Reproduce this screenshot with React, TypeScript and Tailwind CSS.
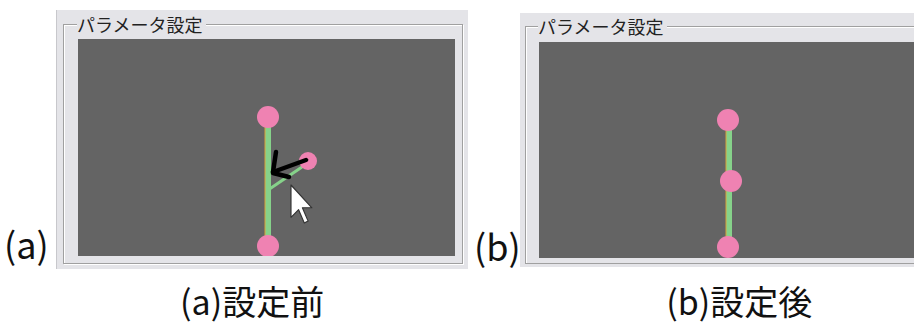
import React from 'react';

const jp = { fontFamily: '"Noto Sans CJK JP", "Noto Sans", sans-serif' };

function Node({ x, y, r = 10 }: { x: number; y: number; r?: number }) {
  return <circle cx={x} cy={y} r={r} fill="#ef82b2" />;
}

function Stem({ x, y1, y2 }: { x: number; y1: number; y2: number }) {
  return (
    <g>
      <line x1={x} y1={y1} x2={x} y2={y2} stroke="#86d28a" strokeWidth={6} />
      <line x1={x - 3} y1={y1} x2={x - 3} y2={y2} stroke="#d9a23a" strokeWidth={1} />
    </g>
  );
}

function BeforeDrawing() {
  return (
    <svg width="377" height="217" viewBox="0 0 377 217">
      <Stem x={190} y1={78} y2={207} />
      {/* branch to the moved node */}
      <line x1={190} y1={151} x2={224} y2={128} stroke="#86d28a" strokeWidth={3} />
      <Node x={190} y={78} r={11} />
      <Node x={190} y={207} r={11} />
      <Node x={230} y={122} r={9} />
      {/* drag arrow */}
      <g stroke="#000" strokeWidth={4.5} strokeLinecap="round" fill="none">
        <line x1={228} y1={121} x2={195} y2={133} />
        <line x1={198} y1={113} x2={195} y2={133} />
        <line x1={195} y1={134} x2={211} y2={138} />
      </g>
      {/* mouse cursor */}
      <g transform="translate(213,146) scale(1.9)">
        <path
          d="M0 0 L0 17 L4 13 L7 20 L9 19 L6 12 L11 12 Z"
          fill="#fff"
          stroke="#333"
          strokeWidth={0.6}
          strokeLinejoin="round"
        />
      </g>
    </svg>
  );
}

function AfterDrawing() {
  return (
    <svg width="375" height="216" viewBox="0 0 375 216">
      <Stem x={190} y1={78} y2={205} />
      <Node x={189} y={78} r={11} />
      <Node x={192} y={139} r={11} />
      <Node x={189} y={205} r={11} />
    </svg>
  );
}

function Panel({ wide, children }: { wide?: boolean; children: React.ReactNode }) {
  return (
    <div
      className={
        wide
          ? 'mt-[13px] h-[254px] w-[394px] shrink-0 bg-[#e4e4e8] pl-[5px] pt-[3px]'
          : 'mt-[10px] h-[259px] w-[412px] shrink-0 bg-[#e4e4e8] pl-[7px] pt-[4px] pr-[5px] shadow-[inset_1px_0_0_#c8c8cc]'
      }
    >
      <fieldset
        className={
          wide
            ? 'h-[248px] border border-r-0 border-[#a0a0a0] pl-[13px] shadow-[inset_1px_1px_0_#fff]'
            : 'h-[250px] border border-[#a0a0a0] pl-[14px] pr-[7px] shadow-[inset_1px_1px_0_#fff,1px_1px_0_#fff]'
        }
      >
        <legend
          className="-ml-[1px] bg-[#e4e4e8] pr-[4px] text-[18px] leading-[21px] text-[#222]"
          style={jp}
        >
          パラメータ設定
        </legend>
        <div className={wide ? 'mt-[5px] h-[216px] bg-[#646464]' : 'mt-[4px] h-[217px] bg-[#646464]'}>
          {children}
        </div>
      </fieldset>
    </div>
  );
}

export default function App() {
  return (
    <div className="h-[325px] w-[914px] overflow-hidden bg-white" style={jp}>
      <div className="flex h-[272px]">
        <div className="flex w-[56px] shrink-0 items-end pb-[9px] pl-[4px]">
          <span className="text-[36px] leading-[40px] text-[#111]">(a)</span>
        </div>
        <Panel>
          <BeforeDrawing />
        </Panel>
        <div className="flex w-[52px] shrink-0 items-end pb-[7px] pl-[6px]">
          <span className="text-[36px] leading-[40px] text-[#111]">(b)</span>
        </div>
        <Panel wide>
          <AfterDrawing />
        </Panel>
      </div>
      <div className="flex pt-[9px] text-[34px] leading-[40px] text-[#111]">
        <span className="ml-[180px]">(a)設定前</span>
        <span className="ml-[342px]">(b)設定後</span>
      </div>
    </div>
  );
}
